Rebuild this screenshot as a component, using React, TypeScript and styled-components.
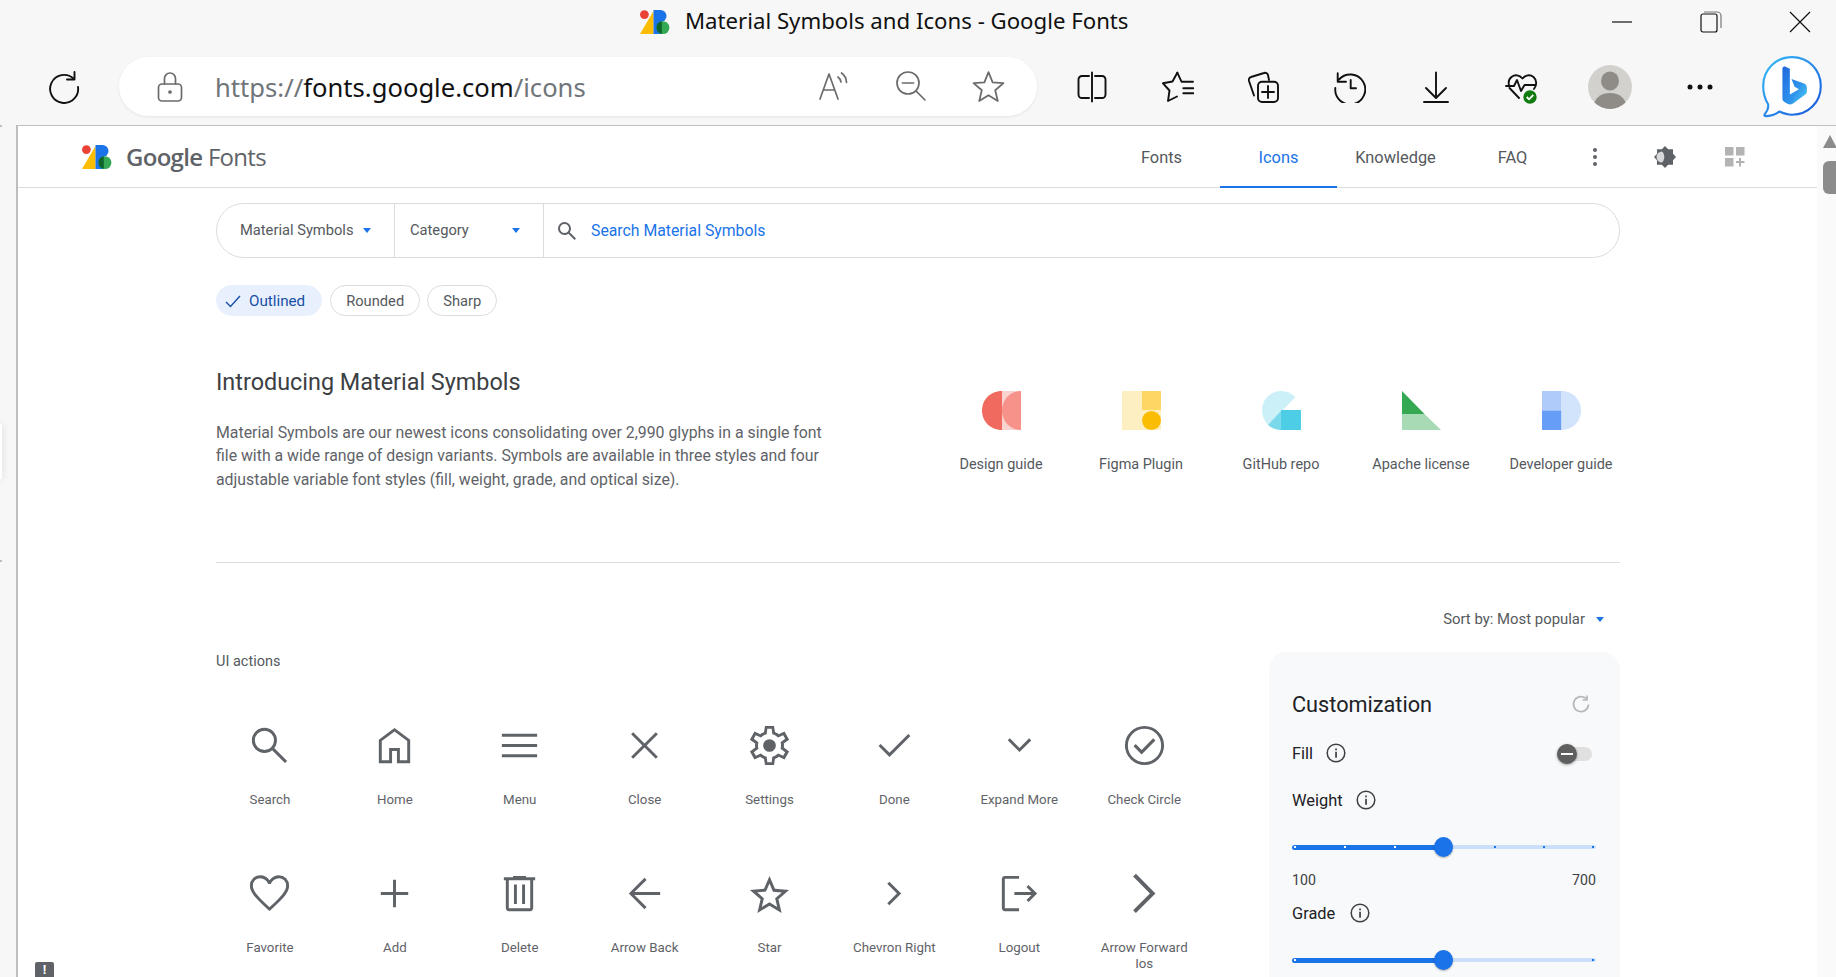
import React from 'react';
import styled, { createGlobalStyle } from 'styled-components';

const GlobalStyle = createGlobalStyle`
  html, body { margin: 0; padding: 0; background: #f7f7f7; }
  * { box-sizing: border-box; }
`;

const Shell = styled.div`
  position: relative;
  width: 1836px;
  height: 977px;
  overflow: hidden;
  background: #f7f7f7;
  font-family: Roboto, "Liberation Sans", sans-serif;
  color: #5f6368;
`;

const TitleBar = styled.div`
  height: 44px;
  display: flex;
  align-items: center;
  padding-left: 640px;
`;

const TitleText = styled.span`
  margin-left: 15px;
  margin-top: -3px;
  font-family: "Noto Sans", sans-serif;
  font-size: 22.2px;
  color: #111;
  white-space: nowrap;
`;

const WindowControls = styled.div`
  margin-left: auto;
  margin-right: -8px;
  display: flex;
`;

const WindowButton = styled.div`
  width: 89px;
  height: 44px;
  display: flex;
  align-items: center;
  justify-content: center;
`;

const Toolbar = styled.div`
  height: 81px;
  padding-top: 4px;
  padding-left: 47px;
  display: flex;
  align-items: center;
`;

const ReloadCell = styled.div`
  width: 34px;
  height: 34px;
  flex: none;
  margin-right: 38px;
`;

const AddressBar = styled.div`
  width: 918px;
  height: 59px;
  flex: none;
  margin-right: 12px;
  padding: 0 32px 0 38px;
  border-radius: 30px;
  background: #fff;
  box-shadow: 0 1px 3px rgba(0, 0, 0, 0.08);
  display: flex;
  align-items: center;
`;

const UrlText = styled.div`
  margin-left: 32px;
  padding-top: 2px;
  font-family: "Noto Sans", sans-serif;
  font-size: 25.6px;
  color: #70757a;
  white-space: nowrap;
  span { color: #111; }
`;

const AddressActions = styled.div`
  margin-left: auto;
  display: flex;
  gap: 45px;
`;

const ToolCell = styled.div<{ $w: number }>`
  width: ${(p) => p.$w}px;
  flex: none;
  display: flex;
  align-items: center;
  justify-content: center;
`;

const Page = styled.div`
  display: flex;
  height: 852px;
`;

const LeftGutter = styled.div`
  width: 16px;
  flex: none;
`;

const SideTab = styled.div`
  position: absolute;
  left: 0;
  top: 424px;
  width: 2px;
  height: 55px;
  background: #fff;
  box-shadow: 0 0 7px rgba(0, 0, 0, 0.22);
`;

const GutterMark = styled.div<{ $top: number }>`
  position: absolute;
  left: 0;
  top: ${(p) => p.$top}px;
  width: 2px;
  height: 2px;
  background: #bdbdbd;
`;

const Frame = styled.div`
  flex: 1;
  display: flex;
  background: #fff;
  border-top: 1px solid #c2c2c2;
  border-left: 2px solid #bdbdbd;
  overflow: hidden;
`;

const Column = styled.div`
  width: 1799px;
  flex: none;
`;

const ScrollGutter = styled.div`
  flex: 1;
  background: #fafafa;
  padding: 9px 0 0 6px;
`;

const ScrollArrow = styled.div`
  width: 0;
  height: 0;
  border-left: 7px solid transparent;
  border-right: 7px solid transparent;
  border-bottom: 13px solid #8c8c8c;
`;

const ScrollThumb = styled.div`
  width: 18px;
  height: 33px;
  margin-top: 13px;
  border-radius: 6px;
  background: #8c8c8c;
`;

const Header = styled.header`
  height: 62px;
  border-bottom: 1px solid #dadce0;
  padding-left: 64px;
  padding-right: 58px;
  display: flex;
  align-items: center;
`;

const Brand = styled.div`
  margin-left: 14px;
  font-family: "Open Sans", sans-serif;
  font-size: 24px;
  letter-spacing: -0.7px;
  color: #5f6368;
  white-space: nowrap;
  b { font-weight: 600; }
`;

const Nav = styled.nav`
  margin-left: auto;
  height: 61px;
  display: flex;
  align-items: stretch;
`;

const NavTab = styled.div<{ $active?: boolean }>`
  width: 117px;
  padding-top: 1px;
  display: flex;
  align-items: center;
  justify-content: center;
  font-size: 16.4px;
  font-weight: 400;
  color: ${(p) => (p.$active ? '#1a73e8' : '#55595d')};
  position: relative;
  &::after {
    content: '';
    position: absolute;
    left: 0;
    right: 0;
    bottom: -1px;
    height: 2px;
    background: ${(p) => (p.$active ? '#1a73e8' : 'transparent')};
  }
`;

const NavIcon = styled.div<{ $w: number }>`
  width: ${(p) => p.$w}px;
  display: flex;
  align-items: center;
  justify-content: center;
`;

const Main = styled.main`
  width: 1602px;
  padding-left: 198px;
`;

const SearchBar = styled.div`
  margin-top: 15px;
  height: 55px;
  border: 1.5px solid #dadce0;
  border-radius: 28px;
  display: flex;
  align-items: stretch;
`;

const SelectBox = styled.div<{ $w: number; $pad: number }>`
  width: ${(p) => p.$w}px;
  padding: 0 23px 1px ${(p) => p.$pad}px;
  border-right: 1.5px solid #dadce0;
  display: flex;
  align-items: center;
  justify-content: space-between;
  font-size: 14.7px;
  font-weight: 400;
  color: #55595d;
`;

const Caret = styled.span`
  width: 0;
  height: 0;
  border-left: 4.5px solid transparent;
  border-right: 4.5px solid transparent;
  border-top: 5px solid #1a73e8;
`;

const SearchField = styled.div`
  flex: 1;
  padding-left: 11px;
  display: flex;
  align-items: center;
  gap: 12px;
  font-size: 15.8px;
  color: #1a73e8;
  svg { fill: #5f6368; }
`;

const ChipRow = styled.div`
  margin-top: 27px;
  display: flex;
`;

const Chip = styled.div<{ $selected?: boolean; $gap: number }>`
  height: 31px;
  margin-right: ${(p) => p.$gap}px;
  padding: 0 ${(p) => (p.$selected ? '16px' : '15px')} 0 ${(p) => (p.$selected ? '8px' : '15px')};
  border-radius: 16px;
  border: 1px solid ${(p) => (p.$selected ? '#e8f0fe' : '#dadce0')};
  background: ${(p) => (p.$selected ? '#e8f0fe' : '#fff')};
  color: ${(p) => (p.$selected ? '#174ea6' : '#55595d')};
  display: flex;
  align-items: center;
  gap: 8px;
  font-size: ${(p) => (p.$selected ? '15.2px' : '14.7px')};
  font-weight: 400;
`;

const Intro = styled.section`
  margin-top: 51px;
  height: 195px;
  display: flex;
  justify-content: space-between;
`;

const IntroText = styled.div`
  width: 620px;
`;

const IntroTitle = styled.h2`
  margin: 0;
  font-size: 23.4px;
  line-height: 30px;
  font-weight: 400;
  color: #3c4043;
`;

const IntroBody = styled.p`
  margin: 24px 0 0;
  font-size: 15.85px;
  line-height: 23.4px;
  color: #5f6368;
`;

const LinkRow = styled.div`
  margin-right: -11px;
  padding-top: 24px;
  display: flex;
`;

const LinkItem = styled.div`
  width: 140px;
  display: flex;
  flex-direction: column;
  align-items: center;
  gap: 25px;
  font-size: 14.45px;
  line-height: 20px;
  font-weight: 400;
  color: #55595d;
`;

const Divider = styled.hr`
  margin: 0;
  border: 0;
  height: 1px;
  background: #dadce0;
`;

const SortRow = styled.div`
  margin-top: 46px;
  height: 20px;
  padding-right: 16px;
  display: flex;
  align-items: center;
  justify-content: flex-end;
  gap: 11px;
  font-size: 14.9px;
  font-weight: 400;
  color: #55595d;
`;

const Body = styled.div`
  margin-top: 23px;
  display: flex;
  justify-content: space-between;
`;

const IconSection = styled.div`
  margin-top: -1px;
`;

const SectionLabel = styled.div`
  padding-top: 1px;
  font-size: 14.5px;
  line-height: 20px;
  font-weight: 400;
  color: #55595d;
`;

const IconGrid = styled.div`
  margin: 50px 0 0 -8.5px;
  display: grid;
  grid-template-columns: repeat(8, 124.9px);
  grid-auto-rows: 148px;
`;

const IconCell = styled.div`
  padding: 0 12px;
  display: flex;
  flex-direction: column;
  align-items: center;
  text-align: center;
  font-size: 13.3px;
  line-height: 16px;
  color: #5f6368;
  svg { flex: none; margin-bottom: 23px; fill: #5f6368; }
`;

const Panel = styled.aside`
  width: 351px;
  height: 400px;
  padding: 38px 24px 0 23px;
  border-radius: 18px;
  background: #f8f9fa;
  color: #202124;
`;

const PanelHead = styled.div`
  height: 28px;
  padding-right: 5px;
  display: flex;
  align-items: center;
  justify-content: space-between;
  font-size: 21.7px;
`;

const PanelRow = styled.div<{ $top: number; $gap: number }>`
  margin-top: ${(p) => p.$top}px;
  height: 22px;
  display: flex;
  align-items: center;
  gap: ${(p) => p.$gap}px;
  font-size: 16.4px;
`;

const Toggle = styled.div`
  position: relative;
  margin-left: auto;
  margin-right: 4px;
  top: 1px;
  width: 35px;
  height: 14px;
  border-radius: 7px;
  background: #e0e0e0;
`;

const ToggleKnob = styled.div`
  position: absolute;
  left: 0;
  top: -3px;
  width: 20px;
  height: 20px;
  border-radius: 50%;
  background: #5f5f5f;
  box-shadow: 0 1px 3px rgba(0, 0, 0, 0.35);
  &::after {
    content: '';
    position: absolute;
    left: 4px;
    top: 9px;
    width: 12px;
    height: 2px;
    background: #fff;
  }
`;

const Slider = styled.div<{ $top: number }>`
  position: relative;
  margin-top: ${(p) => p.$top}px;
  width: 304px;
  height: 20px;
`;

const TrackActive = styled.div`
  position: absolute;
  left: 0;
  width: 152px;
  top: 7.5px;
  height: 5px;
  border-radius: 3px 0 0 3px;
  background: #1a73e8;
`;

const TrackRest = styled.div`
  position: absolute;
  left: 152px;
  right: 0;
  top: 8px;
  height: 4px;
  border-radius: 0 2px 2px 0;
  background: #cbdffa;
`;

const Tick = styled.i<{ $x: number; $on: boolean }>`
  position: absolute;
  left: ${(p) => p.$x}px;
  top: 9px;
  width: 2px;
  height: 2px;
  background: ${(p) => (p.$on ? '#fff' : '#1a73e8')};
`;

const Thumb = styled.div`
  position: absolute;
  left: 142px;
  top: 0;
  width: 19px;
  height: 20px;
  border-radius: 50%;
  background: #1a73e8;
  box-shadow: 0 1px 2px rgba(0, 0, 0, 0.3);
`;

const ScaleRow = styled.div`
  margin-top: 13px;
  width: 304px;
  height: 20px;
  display: flex;
  justify-content: space-between;
  align-items: center;
  font-size: 14.2px;
  color: #3c4043;
`;

const Badge = styled.div`
  position: absolute;
  left: 35px;
  top: 962px;
  width: 19px;
  height: 15px;
  border-radius: 2px 2px 0 0;
  background: #5f6368;
  color: #fff;
  text-align: center;
  font-size: 13px;
  font-weight: 700;
  line-height: 15px;
`;

const Line = { fill: 'none', stroke: '#111', strokeWidth: 1.9, strokeLinecap: 'round', strokeLinejoin: 'round' } as const;
const GrayLine = { ...Line, stroke: '#6b6b6b', strokeWidth: 1.7 };

const GoogleFontsLogo = ({ h }: { h: number }) => (
  <svg width={(h * 30) / 24} height={h} viewBox="0 0 30 24">
    <path d="M0 24 13.5 1V24Z" fill="#fbbc04" />
    <circle cx="4.4" cy="4.6" r="4.4" fill="#ea4335" />
    <path d="M13.5 0h7a6 6 0 0 1 0 12h-7Z" fill="#1a73e8" />
    <path d="M13.5 12h8v12h-8Z" fill="#1a73e8" />
    <circle cx="23" cy="17.6" r="6.4" fill="#34a853" />
    <path d="M21.8 11.3a6.4 6.4 0 0 0 0 12.6Z" fill="#0d652d" />
  </svg>
);

const Reload = () => (
  <svg width="34" height="34" viewBox="0 0 34 34" {...Line}>
    <path d="M26.5 8.5A14 14 0 1 0 31 17" />
    <path d="M27.5 2v7.5H20" />
  </svg>
);

const Lock = () => (
  <svg width="26" height="30" viewBox="0 0 26 30" {...GrayLine}>
    <rect x="1.5" y="12" width="23" height="17" rx="3.5" />
    <path d="M7.5 12V6.5a5.5 5.5 0 0 1 11 0V12" />
    <circle cx="13" cy="20" r="1" fill="#6b6b6b" />
  </svg>
);

const ReadAloud = () => (
  <svg width="32" height="30" viewBox="0 0 32 30" {...GrayLine}>
    <path d="M2 29 11 4l9 25M5.5 20h11" />
    <path d="M20 7a8 8 0 0 1 3 5M23.5 3a12 12 0 0 1 5 9.5" />
  </svg>
);

const ZoomOut = () => (
  <svg width="32" height="32" viewBox="0 0 32 32" {...GrayLine}>
    <circle cx="13" cy="13" r="11" />
    <path d="M7.5 13h11M21 21l9 9" />
  </svg>
);

const StarOutline = () => (
  <svg width="33" height="33" viewBox="0 0 32 32" {...GrayLine}>
    <path d="M16 2 20 12l10.5.8-8 6.8 2.5 10.400L16 24.400 7 30l2.500-10.400-8-6.800L12 12Z" />
  </svg>
);

const SplitScreen = () => (
  <svg width="32" height="32" viewBox="0 0 32 32" {...Line}>
    <path d="M13 5H6a3.500 3.500 0 0 0-3.500 3.500v15A3.500 3.500 0 0 0 6 27h7M19 5h7a3.500 3.500 0 0 1 3.500 3.500v15A3.500 3.500 0 0 1 26 27h-7M16 1.500v29" />
  </svg>
);

const Favorites = () => (
  <svg width="32" height="32" viewBox="0 0 32 32" {...Line}>
    <path d="M15.300 1.700 10.500 10.500 1 12.300l6.500 7.200L6 30l9-4.500" />
    <path d="M15.300 1.700 19.500 10.700h11.500M21.300 17.300h10M21.300 22.300h10" />
  </svg>
);

const Collections = () => (
  <svg width="32" height="32" viewBox="0 0 32 32" {...Line}>
    <path d="M6 24.500 1 10a3 3 0 0 1 2-4L16 2a3 3 0 0 1 4 2l1 5" />
    <rect x="10" y="10.700" width="20" height="20.300" rx="4" />
    <path d="M20 15v12M14 21h12" />
  </svg>
);

const History = () => (
  <svg width="32" height="32" viewBox="0 0 32 32" {...Line}>
    <path d="M5 8.500A15 15 0 1 1 1.300 17M3.700 2.300v8.400H12" />
    <path d="M16.700 9v8.300H22" />
  </svg>
);

const Download = () => (
  <svg width="30" height="32" viewBox="0 0 30 32" {...Line}>
    <path d="M15 1.500v25M5 17l10 10 10-10M3 31h24" />
  </svg>
);

const Health = () => (
  <svg width="34" height="36" viewBox="0 0 34 36">
    <path d="M14 29 4.500 19M1 17h8l3-6 4 11 3.500-6h10M29 20c3-3.500 3-9-.5-12-3.500-2.800-8-2-11 1.500C14.500 6 10 5.200 6.500 8 4 10 3.200 13 4 16" {...Line} />
    <circle cx="25" cy="28" r="6.700" fill="#107c10" />
    <path d="m21.700 28 2.300 2.300 4.300-4.300" fill="none" stroke="#fff" strokeWidth="1.800" />
  </svg>
);

const Avatar = () => (
  <svg width="44" height="44" viewBox="0 0 44 44">
    <circle cx="22" cy="22" r="22" fill="#d2d1cd" />
    <ellipse cx="22" cy="16" rx="9" ry="9.500" fill="#8f8b86" />
    <path d="M6.500 37.500C9 31 15 28 22 28s13 3 15.500 9.500A22 22 0 0 1 6.500 37.500Z" fill="#8f8b86" />
  </svg>
);

const MoreDots = () => (
  <svg width="26" height="6" viewBox="0 0 26 6" fill="#111">
    <circle cx="3" cy="3" r="2.500" />
    <circle cx="13" cy="3" r="2.500" />
    <circle cx="23" cy="3" r="2.500" />
  </svg>
);

const BingBubble = () => (
  <svg width="64" height="64" viewBox="0 0 60 60">
    <defs>
      <linearGradient id="bingRing" x1="0" y1="0" x2="1" y2="1">
        <stop offset="0" stopColor="#37bdf8" />
        <stop offset="1" stopColor="#1a56db" />
      </linearGradient>
      <linearGradient id="bingMark" x1="0" y1="0" x2="1" y2="1">
        <stop offset="0" stopColor="#1f68dc" />
        <stop offset="0.6" stopColor="#2f93ec" />
        <stop offset="1" stopColor="#4fd0f2" />
      </linearGradient>
    </defs>
    <path d="M30 2C14.500 2 3 14 3 29c0 6 1.500 12 4.500 17 .8 3-1 7-3 9.500-.8 1.200 0 2 1.500 1.800 5-.5 9-2 12-4.300C21.500 54.500 25.500 56 30 56c15.500 0 27-12 27-27S45.500 2 30 2Z" fill="#fff" stroke="url(#bingRing)" strokeWidth="2" />
    <path d="M21 13c0-2 1.300-2.800 3-2l4 1.800V37l8.500-5-4-2.300-3-7.200 11.800 4.300c1.800.8 2.700 2 2.700 4v2.700c0 2-.8 3.200-2.500 4.200L31 45.500c-2 1.200-3.700 1.200-5.300.2l-2.700-1.700c-1.400-.8-2-2-2-3.500Z" fill="url(#bingMark)" />
  </svg>
);

const SymbolIcon = ({ d, size = 47 }: { d: string; size?: number }) => (
  <svg width={size} height={size} viewBox="0 -960 960 960">
    <path d={d} />
  </svg>
);

const searchSmall = 'M784-120 532-372q-30 24-69 38t-83 14q-109 0-184.500-75.500T120-580q0-109 75.500-184.500T380-840q109 0 184.500 75.500T640-580q0 44-14 83t-38 69l252 252-56 56ZM380-400q75 0 127.500-52.500T560-580q0-75-52.500-127.500T380-760q-75 0-127.500 52.500T200-580q0 75 52.500 127.500T380-400Z';

const icons: { label: string; d: string }[] = [
  { label: 'Search', d: 'M796-121 533-384q-30 26-69.959 40.500T378-329q-108.162 0-183.081-75Q120-479 120-585t75-181q75-75 181.500-75t181 75Q632-691 632-584.850 632-542 618-502q-14 40-42 75l264 262-44 44ZM377-389q81.250 0 138.125-57.500T572-585q0-81-56.875-138.500T377-781q-82.083 0-139.542 57.500Q180-666 180-585t57.458 138.500Q294.917-389 377-389Z' },
  { label: 'Home', d: 'M220-180h150v-250h220v250h150v-390L480-765 220-570v390Zm-60 60v-480l320-240 320 240v480H530v-250H430v250H160Zm320-353Z' },
  { label: 'Menu', d: 'M120-240v-60h720v60H120Zm0-210v-60h720v60H120Zm0-210v-60h720v60H120Z' },
  { label: 'Close', d: 'm249-207-42-42 231-231-231-231 42-42 231 231 231-231 42 42-231 231 231 231-42 42-231-231-231 231Z' },
  { label: 'Settings', d: 'm388-80-20-126q-19-7-40-19t-37-25l-118 54-93-164 108-79q-2-9-2.500-20.500T185-480q0-9 .5-20.500T188-521L80-600l93-164 118 54q16-13 37-25t40-18l20-127h184l20 126q19 7 40.500 18.500T669-710l118-54 93 164-108 77q2 10 2.500 21.500t.5 21.500q0 10-.5 21t-2.500 21l108 78-93 164-118-54q-16 13-36.500 25.500T592-206L572-80H388Zm48-60h88l14-112q33-8 62.500-25t53.500-41l106 46 40-72-94-69q4-17 6.500-33.500T715-480q0-17-2-33.500t-7-33.500l94-69-40-72-106 46q-23-26-52-43.500T538-708l-14-112h-88l-14 112q-34 7-63.500 24T306-642l-106-46-40 72 94 69q-4 17-6.500 33.500T245-480q0 17 2.500 33.500T254-413l-94 69 40 72 106-46q24 24 53.500 41t62.500 25l14 112Zm44-210q54 0 92-38t38-92q0-54-38-92t-92-38q-54 0-92 38t-38 92q0 54 38 92t92 38Zm0-130Z' },
  { label: 'Done', d: 'M378-246 154-470l43-43 181 181 384-384 43 43-427 427Z' },
  { label: 'Expand More', d: 'M480-345 240-585l43-43 197 198 197-197 43 43-240 239Z' },
  { label: 'Check Circle', d: 'm421-298 283-283-46-45-237 237-120-120-45 45 165 166Zm59 218q-82 0-155-31.500t-127.500-86Q143-252 111.500-325T80-480q0-83 31.500-156t86-127Q252-817 325-848.500T480-880q83 0 156 31.500T763-763q54 54 85.500 127T880-480q0 82-31.500 155T763-197.500q-54 54.500-127 86T480-80Zm0-60q142 0 241-99.500T820-480q0-142-99-241t-241-99q-141 0-240.500 99T140-480q0 141 99.500 240.500T480-140Zm0-340Z' },
  { label: 'Favorite', d: 'm480-121-41-37q-105.768-97.121-174.884-167.561Q195-396 154-451.500T96.500-552Q80-597 80-643q0-90.155 60.500-150.577Q201-854 290-854q57 0 105.500 27t84.500 78q42-54 89-79.500T670-854q89 0 149.500 60.423Q880-733.155 880-643q0 46-16.500 91T806-451.500Q765-396 695.884-325.561 626.768-255.121 521-158l-41 37Zm0-79q101.236-92.995 166.618-159.498Q712-426 750.500-476t54-89.135q15.500-39.136 15.500-77.720Q820-709 778-751.500T670.225-794q-51.524 0-95.375 31.500Q531-731 504-674h-49q-26-56-69.850-88-43.851-32-95.375-32Q224-794 182-751.500t-42 108.816Q140-604 155.500-564.500t54 90Q248-424 314-358t166 158Zm0-297Z' },
  { label: 'Add', d: 'M450-200v-250H200v-60h250v-250h60v250h250v60H510v250h-60Z' },
  { label: 'Delete', d: 'M261-120q-24.750 0-42.375-17.625T201-180v-570h-41v-60h188v-30h264v30h188v60h-41v570q0 24-18 42t-42 18H261Zm438-630H261v570h438v-570ZM367-266h60v-399h-60v399Zm166 0h60v-399h-60v399ZM261-750v570-570Z' },
  { label: 'Arrow Back', d: 'M480-160 160-480l320-320 42 42-248 248h526v60H274l248 248-42 42Z' },
  { label: 'Star', d: 'm323-205 157-94 157 95-42-178 138-120-182-16-71-168-71 167-182 16 138 120-42 178Zm-90 125 65-281L80-550l288-25 112-265 112 265 288 25-218 189 65 281-247-149L233-80Zm247-355Z' },
  { label: 'Chevron Right', d: 'M530-481 332-679l43-43 241 241-241 241-43-43 198-198Z' },
  { label: 'Logout', d: 'M180-120q-24 0-42-18t-18-42v-600q0-24 18-42t42-18h291v60H180v600h291v60H180Zm486-185-43-43 102-102H375v-60h348L621-612l43-43 176 176-174 174Z' },
  { label: 'Arrow Forward Ios', d: 'm304-82-56-57 343-343-343-343 56-57 400 400L304-82Z' },
];

const DesignArt = () => (
  <svg width="39" height="39" viewBox="0 0 39 39">
    <path d="M20 0C8 0 0 9 0 19.500S8 39 20 39Z" fill="#f06a5f" />
    <rect x="20" width="19" height="39" fill="#fad2cf" />
    <path d="M39 0C28 0 20 9 20 19.500S28 39 39 39Z" fill="#f6928a" />
  </svg>
);

const FigmaArt = () => (
  <svg width="39" height="39" viewBox="0 0 39 39">
    <rect width="20" height="39" fill="#feefc3" />
    <rect x="20" width="19" height="19" fill="#fdd663" />
    <rect x="20" y="19" width="19" height="20" fill="#feefc3" />
    <ellipse cx="29.500" cy="29.500" rx="9.500" ry="9.500" fill="#fbbc04" />
  </svg>
);

const GithubArt = () => (
  <svg width="39" height="39" viewBox="0 0 39 39">
    <path d="M33.500 6C29 2 24.500 0 19 0 8 0 0 9 0 19.500 0 25 2.500 30 6 34Z" fill="#cbf0f8" />
    <path d="M6 34 19 20v19c-5 0-9-2-13-5Z" fill="#7bd9ec" />
    <rect x="19" y="19" width="20" height="20" fill="#4ecde6" />
  </svg>
);

const LicenseArt = () => (
  <svg width="39" height="39" viewBox="0 0 39 39">
    <path d="M0 0 22.500 23H0Z" fill="#34a853" />
    <path d="M0 23h22.500L39 39H0Z" fill="#a8dab5" />
  </svg>
);

const DeveloperArt = () => (
  <svg width="39" height="39" viewBox="0 0 39 39">
    <rect width="19.500" height="19.500" fill="#aecbfa" />
    <rect y="19.500" width="19.500" height="19.500" fill="#669df6" />
    <path d="M19.500 0C31 0 39 9 39 19.500S31 39 19.500 39Z" fill="#d2e3fc" />
  </svg>
);

const Info = () => (
  <svg width="20" height="20" viewBox="0 0 20 20">
    <circle cx="10" cy="10" r="8.800" fill="none" stroke="#3c4043" strokeWidth="1.500" />
    <rect x="9.200" y="8.800" width="1.700" height="6" fill="#3c4043" />
    <rect x="9.200" y="5.500" width="1.700" height="1.800" fill="#3c4043" />
  </svg>
);

const weightTicks = [2, 52, 102, 202, 251, 300];
const gradeTicks = [2, 300];

export default function App() {
  return (
    <Shell>
      <GlobalStyle />
      <TitleBar>
        <GoogleFontsLogo h={24} />
        <TitleText>Material Symbols and Icons - Google Fonts</TitleText>
        <WindowControls>
          <WindowButton>
            <svg width="22" height="4" viewBox="0 0 22 4"><path d="M1 2h20" stroke="#111" strokeWidth="1.200" /></svg>
          </WindowButton>
          <WindowButton>
            <svg width="22" height="22" viewBox="0 0 22 22" fill="none" stroke="#111" strokeWidth="1.200">
              <rect x="1" y="3" width="16" height="18" rx="2" />
              <path d="M4 1h13a4 4 0 0 1 4 4v12" stroke="#777" />
            </svg>
          </WindowButton>
          <WindowButton>
            <svg width="22" height="22" viewBox="0 0 22 22"><path d="M1 1l20 20M21 1 1 21" stroke="#111" strokeWidth="1.200" /></svg>
          </WindowButton>
        </WindowControls>
      </TitleBar>

      <Toolbar>
        <ReloadCell><Reload /></ReloadCell>
        <AddressBar>
          <Lock />
          <UrlText>https://<span>fonts.google.com</span>/icons</UrlText>
          <AddressActions>
            <ReadAloud />
            <ZoomOut />
            <StarOutline />
          </AddressActions>
        </AddressBar>
        <ToolCell $w={86}><SplitScreen /></ToolCell>
        <ToolCell $w={86}><Favorites /></ToolCell>
        <ToolCell $w={86}><Collections /></ToolCell>
        <ToolCell $w={86}><History /></ToolCell>
        <ToolCell $w={86}><Download /></ToolCell>
        <ToolCell $w={86}><Health /></ToolCell>
        <ToolCell $w={90}><Avatar /></ToolCell>
        <ToolCell $w={90}><MoreDots /></ToolCell>
        <ToolCell $w={93}><BingBubble /></ToolCell>
      </Toolbar>

      <Page>
        <LeftGutter />
        <Frame>
          <Column>
            <Header>
              <GoogleFontsLogo h={24} />
              <Brand><b>Google</b> Fonts</Brand>
              <Nav>
                <NavTab>Fonts</NavTab>
                <NavTab $active>Icons</NavTab>
                <NavTab>Knowledge</NavTab>
                <NavTab>FAQ</NavTab>
                <NavIcon $w={48}>
                  <svg width="6" height="20" viewBox="0 0 6 20" fill="#5f6368">
                    <circle cx="3" cy="3" r="2" />
                    <circle cx="3" cy="10" r="2" />
                    <circle cx="3" cy="17" r="2" />
                  </svg>
                </NavIcon>
                <NavIcon $w={92}>
                  <svg width="24" height="24" viewBox="0 0 24 24">
                    <path d="M12 1l3.200 3.200H20v4.600L23 12l-3 3.200v4.600h-4.800L12 23l-3.200-3.200H4v-4.600L1 12l3-3.200V4.200h4.800Z" fill="#5f6368" />
                    <path d="M10.500 6.500a5.500 5.500 0 0 0 0 11c1.500-1.200 2.300-3.300 2.300-5.500s-.8-4.300-2.300-5.500Z" fill="#fff" opacity="0.75" transform="translate(-1.500 0)" />
                  </svg>
                </NavIcon>
                <NavIcon $w={48}>
                  <svg width="22" height="22" viewBox="0 0 22 22" fill="#b3b3b3">
                    <rect x="1" y="1" width="8.500" height="8.500" />
                    <rect x="12" y="1" width="8.500" height="8.500" />
                    <rect x="1" y="12" width="8.500" height="8.500" />
                    <path d="M15 12h2v3h3.500v2H17v3.500h-2V17h-3v-2h3Z" />
                  </svg>
                </NavIcon>
              </Nav>
            </Header>

            <Main>
              <SearchBar>
                <SelectBox $w={178} $pad={23}>Material Symbols<Caret /></SelectBox>
                <SelectBox $w={149} $pad={15}>Category<Caret /></SelectBox>
                <SearchField>
                  <SymbolIcon d={searchSmall} size={24} />
                  Search Material Symbols
                </SearchField>
              </SearchBar>

              <ChipRow>
                <Chip $selected $gap={8}>
                  <svg width="16" height="14" viewBox="0 0 16 14"><path d="M1 8l4.500 4.500L15 2" fill="none" stroke="#174ea6" strokeWidth="1.400" /></svg>
                  Outlined
                </Chip>
                <Chip $gap={7}>Rounded</Chip>
                <Chip $gap={0}>Sharp</Chip>
              </ChipRow>

              <Intro>
                <IntroText>
                  <IntroTitle>Introducing Material Symbols</IntroTitle>
                  <IntroBody>
                    Material Symbols are our newest icons consolidating over 2,990 glyphs in a single font file with a wide range of design variants. Symbols are available in three styles and four adjustable variable font styles (fill, weight, grade, and optical size).
                  </IntroBody>
                </IntroText>
                <LinkRow>
                  <LinkItem><DesignArt />Design guide</LinkItem>
                  <LinkItem><FigmaArt />Figma Plugin</LinkItem>
                  <LinkItem><GithubArt />GitHub repo</LinkItem>
                  <LinkItem><LicenseArt />Apache license</LinkItem>
                  <LinkItem><DeveloperArt />Developer guide</LinkItem>
                </LinkRow>
              </Intro>

              <Divider />

              <SortRow>Sort by: Most popular<Caret /></SortRow>

              <Body>
                <IconSection>
                  <SectionLabel>UI actions</SectionLabel>
                  <IconGrid>
                    {icons.map((icon) => (
                      <IconCell key={icon.label}>
                        <SymbolIcon d={icon.d} />
                        {icon.label}
                      </IconCell>
                    ))}
                  </IconGrid>
                </IconSection>

                <Panel>
                  <PanelHead>
                    Customization
                    <svg width="20" height="20" viewBox="0 0 20 20" fill="none" stroke="#b5b8bb" strokeWidth="1.700">
                      <path d="M15.500 5A7.500 7.500 0 1 0 17.500 10.500" />
                      <path d="M16 1.500V6h-4.500" />
                    </svg>
                  </PanelHead>
                  <PanelRow $top={24} $gap={13}>
                    Fill <Info />
                    <Toggle><ToggleKnob /></Toggle>
                  </PanelRow>
                  <PanelRow $top={25} $gap={13}>Weight <Info /></PanelRow>
                  <Slider $top={26}>
                    <TrackActive />
                    <TrackRest />
                    {weightTicks.map((x) => <Tick key={x} $x={x} $on={x < 152} />)}
                    <Thumb />
                  </Slider>
                  <ScaleRow><span>100</span><span>700</span></ScaleRow>
                  <PanelRow $top={12} $gap={15}>Grade <Info /></PanelRow>
                  <Slider $top={26}>
                    <TrackActive />
                    <TrackRest />
                    {gradeTicks.map((x) => <Tick key={x} $x={x} $on={x < 152} />)}
                    <Thumb />
                  </Slider>
                </Panel>
              </Body>
            </Main>
          </Column>
          <ScrollGutter>
            <ScrollArrow />
            <ScrollThumb />
          </ScrollGutter>
        </Frame>
      </Page>

      <SideTab />
      <GutterMark $top={125} />
      <GutterMark $top={560} />
      <Badge>!</Badge>
    </Shell>
  );
}
